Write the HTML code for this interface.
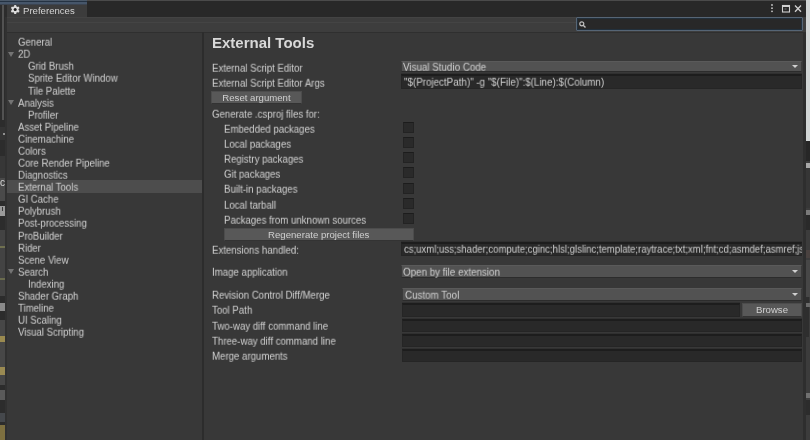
<!DOCTYPE html>
<html><head><meta charset="utf-8">
<style>
*{margin:0;padding:0;box-sizing:border-box}
html,body{width:810px;height:440px;overflow:hidden;background:#383838}
body{position:relative;font-family:"Liberation Sans",sans-serif;color:#c4c4c4}
.a{position:absolute}
.t{position:absolute;white-space:nowrap;font-size:10px;line-height:12px;color:#d2d2d2;transform:translateY(.7px) scaleX(.965);transform-origin:0 0;will-change:transform}
.side .t{font-size:10px;transform:translateY(.7px) scaleX(.96)}
.field{position:absolute;background:#292929;border:1px solid #252525;border-top:2px solid #1d1d1d;box-shadow:0 -1px 0 #303030}
.dd{position:absolute;background:#525252;border:1px solid #3a3a3a;border-top-color:#5a5a5a;border-bottom-color:#2c2c2c}
.btn{position:absolute;background:#585858;border:1px solid #4c4c4c;border-bottom-color:#333;text-align:center;font-size:9.6px;color:#d0d0d0;will-change:transform}
.cb{position:absolute;width:10.5px;height:11px;background:#2a2a2a;border:1px solid #232323;border-top-color:#1c1c1c}
.arr{position:absolute;width:0;height:0;border-left:3px solid transparent;border-right:3px solid transparent;border-top:3.5px solid #d0d0d0}
.fold{position:absolute;width:0;height:0;border-left:3.5px solid transparent;border-right:3.5px solid transparent;border-top:5px solid #747474}
</style></head><body>
<!-- left background strip -->
<div class="a" style="left:0;top:0;width:7px;height:440px;background:#2c2c2c"></div>
<div class="a" style="left:2px;top:4px;width:2px;height:116px;background:#525252"></div>
<div class="a" style="left:0;top:127px;width:6px;height:13px;background:#343434"></div>
<div class="a" style="left:3px;top:133px;width:2px;height:2px;background:#909090"></div>
<div class="a" style="left:0;top:156px;width:6px;height:22px;background:#373737"></div>
<div class="a" style="left:0;top:178px;width:6px;height:23px;background:#4a4a4a"></div>
<div class="t" style="left:0px;top:177px;font-size:10px;color:#d8d8d8;transform:none">c</div>
<div class="a" style="left:0;top:206px;width:6px;height:10px;background:#9a9a9a"></div>
<div class="a" style="left:2px;top:207px;width:1px;height:4px;background:#3a3a3a"></div>
<div class="a" style="left:0;top:230px;width:6px;height:66px;background:#434343"></div>
<div class="a" style="left:0;top:246px;width:6px;height:2px;background:#6f7050"></div>
<div class="a" style="left:0;top:278px;width:6px;height:2px;background:#6a6b4e"></div>
<div class="a" style="left:0;top:303px;width:5px;height:8px;background:#8a8a8a"></div>
<div class="a" style="left:0;top:320px;width:6px;height:65px;background:#474747"></div>
<div class="a" style="left:0;top:336px;width:6px;height:6px;background:#9a8a50"></div>
<div class="a" style="left:0;top:367px;width:6px;height:8px;background:#9a8a52"></div>
<div class="a" style="left:0;top:390px;width:6px;height:10px;background:#5a5a5a"></div>
<div class="a" style="left:0;top:413px;width:6px;height:9px;background:#45484c"></div>
<div class="a" style="left:0;top:425px;width:6px;height:15px;background:#7e7040"></div>
<div class="a" style="left:5px;top:17px;width:2px;height:423px;background:#313131"></div>
<!-- right background strip -->
<div class="a" style="left:806px;top:0;width:4px;height:440px;background:#3c3c3c"></div>
<div class="a" style="left:806px;top:0;width:4px;height:141px;background:#d2d6d6"></div>
<div class="a" style="left:806px;top:141px;width:4px;height:20px;background:#272727"></div>
<div class="a" style="left:806px;top:163px;width:4px;height:5px;background:#a8a8a8"></div>
<div class="a" style="left:806px;top:168px;width:4px;height:40px;background:#363636"></div>
<div class="a" style="left:806px;top:210px;width:4px;height:5px;background:#7a7a7a"></div>
<div class="a" style="left:806px;top:215px;width:4px;height:15px;background:#2a2a2a"></div>
<div class="a" style="left:806px;top:250px;width:4px;height:8px;background:#4a4240"></div>
<div class="a" style="left:806px;top:260px;width:4px;height:37px;background:#474747"></div>
<div class="a" style="left:806px;top:297px;width:3px;height:40px;background:#2e2e2e"></div>
<div class="a" style="left:806px;top:303px;width:4px;height:4px;background:#6a6a6a"></div>
<div class="a" style="left:806px;top:393px;width:4px;height:5px;background:#707070"></div>
<div class="a" style="left:806px;top:400px;width:4px;height:15px;background:#2c2c2c"></div>
<!-- window -->
<div class="a" style="left:7px;top:0;width:799px;height:440px;background:#383838"></div>
<div class="a" style="left:803px;top:17px;width:3px;height:423px;background:#2e2e2e"></div>
<!-- tab bar -->
<div class="a" style="left:7px;top:0;width:799px;height:17px;background:#282828"></div>
<div class="a" style="left:7px;top:0;width:799px;height:1px;background:#4a4a4a"></div>
<!-- active tab -->
<div class="a" style="left:7px;top:1px;width:80px;height:16px;background:#3c3c3c"></div>
<div class="a" style="left:0;top:0;width:87px;height:1px;background:#4a5868"></div>
<div class="a" style="left:0;top:1px;width:87px;height:1px;background:#243242"></div>
<div class="a" style="left:0;top:2px;width:87px;height:2px;background:#46566a"></div>
<div class="a" style="left:0;top:4px;width:87px;height:1px;background:#3c4450"></div>
<svg class="a" style="left:10px;top:4px" width="11" height="11" viewBox="0 0 11 11">
 <circle cx="5.2" cy="5.6" r="3.3" fill="#dcdcdc"/>
 <g fill="#dcdcdc"><rect x="4.1" y="1.1" width="2.2" height="9" rx="0.6"/><rect x="4.1" y="1.1" width="2.2" height="9" rx="0.6" transform="rotate(60 5.2 5.6)"/><rect x="4.1" y="1.1" width="2.2" height="9" rx="0.6" transform="rotate(-60 5.2 5.6)"/></g>
 <circle cx="5.2" cy="5.6" r="1.5" fill="#1a1a1a"/>
</svg>
<div class="t" style="left:23px;top:4px;font-size:9.6px;color:#d4d4d4;transform:translateY(.7px)">Preferences</div>
<!-- right tab icons -->
<svg class="a" style="left:766px;top:2px" width="40" height="14" viewBox="0 0 40 14">
 <g fill="#c8c8c8"><circle cx="6" cy="3" r="0.9"/><circle cx="6" cy="6.2" r="0.9"/><circle cx="6" cy="9.3" r="0.9"/></g>
 <rect x="16.5" y="3.5" width="7" height="6.5" fill="none" stroke="#d0d0d0" stroke-width="1.1"/>
 <rect x="16" y="3" width="8" height="2" fill="#d0d0d0"/>
 <rect x="18.5" y="6.5" width="2" height="1" fill="#777"/>
 <path d="M29 3.5L35 9.8M35 3.5L29 9.8" stroke="#d0d0d0" stroke-width="1.3"/>
</svg>
<!-- toolbar -->
<div class="a" style="left:7px;top:17px;width:799px;height:15px;background:#3d3d3d"></div>
<div class="a" style="left:7px;top:22px;width:569px;height:1px;background:#444"></div>
<div class="a" style="left:7px;top:17px;width:569px;height:1px;background:#434343"></div>
<div class="a" style="left:7px;top:31.5px;width:799px;height:1px;background:#2f2f2f"></div>
<!-- search -->
<div class="a" style="left:576px;top:17px;width:227px;height:13.5px;background:#282828;border:1px solid #566575;box-shadow:inset 0 0 0 1px #22303c;border-radius:1px"></div>
<svg class="a" style="left:579px;top:21px" width="7" height="7" viewBox="0 0 7 7"><circle cx="2.8" cy="2.8" r="2" stroke="#c0c0c0" stroke-width="1.2" fill="none"/><path d="M4.2 4.2L6.5 6.5" stroke="#c0c0c0" stroke-width="1.4"/></svg>

<!-- sidebar -->
<div class="a" style="left:202px;top:32px;width:2px;height:408px;background:#2c2c2c"></div>
<div class="a" style="left:7px;top:180px;width:195px;height:13px;background:#4d4d4d"></div>
<div class="side">
<div class="t" style="left:18px;top:36.1px">General</div>
<div class="fold" style="left:8px;top:51.5px"></div>
<div class="t" style="left:18px;top:48.2px">2D</div>
<div class="t" style="left:28px;top:60.3px">Grid Brush</div>
<div class="t" style="left:28px;top:72.4px">Sprite Editor Window</div>
<div class="t" style="left:28px;top:84.5px">Tile Palette</div>
<div class="fold" style="left:8px;top:99.9px"></div>
<div class="t" style="left:18px;top:96.6px">Analysis</div>
<div class="t" style="left:28px;top:108.6px">Profiler</div>
<div class="t" style="left:18px;top:120.7px">Asset Pipeline</div>
<div class="t" style="left:18px;top:132.8px">Cinemachine</div>
<div class="t" style="left:18px;top:144.9px">Colors</div>
<div class="t" style="left:18px;top:157.0px">Core Render Pipeline</div>
<div class="t" style="left:18px;top:169.1px">Diagnostics</div>
<div class="t" style="left:18px;top:181.2px">External Tools</div>
<div class="t" style="left:18px;top:193.3px">GI Cache</div>
<div class="t" style="left:18px;top:205.4px">Polybrush</div>
<div class="t" style="left:18px;top:217.4px">Post-processing</div>
<div class="t" style="left:18px;top:229.5px">ProBuilder</div>
<div class="t" style="left:18px;top:241.6px">Rider</div>
<div class="t" style="left:18px;top:253.7px">Scene View</div>
<div class="fold" style="left:8px;top:269.1px"></div>
<div class="t" style="left:18px;top:265.8px">Search</div>
<div class="t" style="left:28px;top:277.9px">Indexing</div>
<div class="t" style="left:18px;top:290.0px">Shader Graph</div>
<div class="t" style="left:18px;top:302.1px">Timeline</div>
<div class="t" style="left:18px;top:314.2px">UI Scaling</div>
<div class="t" style="left:18px;top:326.3px">Visual Scripting</div>
</div>

<!-- content -->
<div class="t" style="left:212px;top:33px;font-size:15px;line-height:18px;font-weight:bold;color:#d8d8d8;transform:translateY(.8px)">External Tools</div>

<div class="t" style="left:212px;top:62px">External Script Editor</div>
<div class="dd" style="left:401px;top:61px;width:401px;height:11px"></div>
<div class="t" style="left:403px;top:61px;color:#d0d0d0;transform:translateY(.7px) scaleX(.98)">Visual Studio Code</div>
<div class="arr" style="left:792px;top:64.5px"></div>

<div class="t" style="left:212px;top:77px">External Script Editor Args</div>
<div class="field" style="left:401px;top:74px;width:401px;height:15px"></div>
<div class="t" style="left:404px;top:76px;color:#d0d0d0;transform:translateY(.7px) scaleX(.98)">"$(ProjectPath)" -g "$(File)":$(Line):$(Column)</div>

<div class="btn" style="left:211px;top:91px;width:91px;height:13px;line-height:12px">Reset argument</div>

<div class="t" style="left:212px;top:107.6px">Generate .csproj files for:</div>
<div class="t" style="left:224px;top:122.6px">Embedded packages</div>
<div class="t" style="left:224px;top:137.8px">Local packages</div>
<div class="t" style="left:224px;top:153.0px">Registry packages</div>
<div class="t" style="left:224px;top:168.2px">Git packages</div>
<div class="t" style="left:224px;top:183.4px">Built-in packages</div>
<div class="t" style="left:224px;top:198.6px">Local tarball</div>
<div class="t" style="left:224px;top:213.8px">Packages from unknown sources</div>
<div class="cb" style="left:403px;top:122px"></div>
<div class="cb" style="left:403px;top:137px"></div>
<div class="cb" style="left:403px;top:152px"></div>
<div class="cb" style="left:403px;top:167px"></div>
<div class="cb" style="left:403px;top:183px"></div>
<div class="cb" style="left:403px;top:198px"></div>
<div class="cb" style="left:403px;top:213px"></div>

<div class="btn" style="left:223.5px;top:227.5px;width:189.5px;height:12.5px;line-height:12px">Regenerate project files</div>

<div class="t" style="left:212px;top:244px">Extensions handled:</div>
<div class="field" style="left:401px;top:242px;width:401px;height:14px"></div>
<div class="a" style="left:401px;top:242px;width:401px;height:14px;overflow:hidden"><div class="t" style="left:3px;top:1px;color:#d0d0d0;transform:translateY(.7px) scaleX(.955)">cs;uxml;uss;shader;compute;cginc;hlsl;glslinc;template;raytrace;txt;xml;fnt;cd;asmdef;asmref;json</div></div>

<div class="t" style="left:212px;top:266px">Image application</div>
<div class="dd" style="left:401px;top:265px;width:401px;height:13px"></div>
<div class="t" style="left:403px;top:266px;color:#d0d0d0;transform:translateY(.7px) scaleX(.98)">Open by file extension</div>
<div class="arr" style="left:792px;top:270px"></div>

<div class="t" style="left:212px;top:289px">Revision Control Diff/Merge</div>
<div class="dd" style="left:402px;top:288px;width:400px;height:13px"></div>
<div class="t" style="left:405px;top:289px;color:#d0d0d0;transform:translateY(.7px) scaleX(.98)">Custom Tool</div>
<div class="arr" style="left:792px;top:293px"></div>

<div class="t" style="left:212px;top:304px">Tool Path</div>
<div class="field" style="left:402px;top:303px;width:338px;height:14px"></div>
<div class="btn" style="left:742px;top:303px;width:60px;height:14px;line-height:12px">Browse</div>

<div class="t" style="left:212px;top:320px">Two-way diff command line</div>
<div class="field" style="left:402px;top:319px;width:400px;height:13px"></div>
<div class="t" style="left:212px;top:335px">Three-way diff command line</div>
<div class="field" style="left:402px;top:334px;width:400px;height:13px"></div>
<div class="t" style="left:212px;top:350px">Merge arguments</div>
<div class="field" style="left:402px;top:349px;width:400px;height:13px"></div>
</body></html>
